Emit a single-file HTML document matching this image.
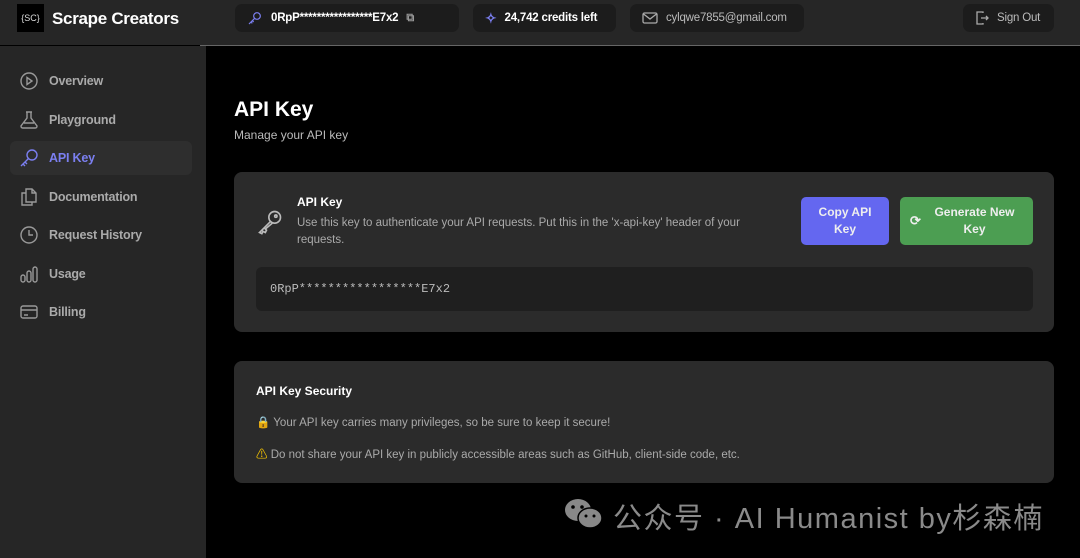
<!DOCTYPE html>
<html><head><meta charset="utf-8"><style>
*{margin:0;padding:0;box-sizing:border-box}
body{width:1080px;height:558px;background:#000;font-family:"Liberation Sans","Noto Sans CJK SC",sans-serif;overflow:hidden;position:relative;color:#fff}
.hdr{position:absolute;left:0;top:0;width:1080px;height:45px;background:#262626}
.line{position:absolute;left:200px;top:45px;width:880px;height:1px;background:#666}
.side{position:absolute;left:0;top:46px;width:206px;height:512px;background:#262626}
.pill{position:absolute;top:4px;height:28px;background:#1c1c1c;border-radius:7px;font-size:11.5px;display:flex;align-items:center;gap:8px;padding:0 12px;white-space:nowrap;letter-spacing:-0.2px}
.logo{position:absolute;left:17px;top:4px;width:27px;height:28px;background:#000;font-size:9px;color:#ddd;display:flex;align-items:center;justify-content:center}
.brand{position:absolute;left:52px;top:9px;font-size:17px;font-weight:bold;letter-spacing:-0.3px}
.nav{position:absolute;left:10px;width:182px;height:34px;border-radius:6px;display:flex;align-items:center;padding-left:9px;gap:10px;font-size:12.5px;font-weight:bold;color:#aaa;letter-spacing:-0.2px}
.nav svg{width:20px;height:20px;fill:none;stroke:#999;stroke-width:1.4}
.card{position:absolute;left:234px;width:820px;background:#2b2b2b;border-radius:8px}
.btn{position:absolute;top:25px;height:48px;border-radius:5px;font-size:12px;font-weight:bold;color:#eee;text-align:center;line-height:17px;display:flex;align-items:center;justify-content:center}
</style></head><body>
<div class="hdr"></div><div class="line"></div><div class="side"></div>
<div class="logo">{SC}</div><div class="brand">Scrape Creators</div>
<div class="pill" style="left:235px;width:224px;font-weight:bold">
<svg width="16" height="16" viewBox="0 0 24 24" fill="none" stroke="#7b7ff0" stroke-width="1.8"><circle cx="15" cy="9" r="5"/><path d="M11.5 12.5L3 21M6 18l2 2M8 16l2 2"/></svg>
<span>0RpP*****************E7x2</span><span style="color:#999;font-size:11px">⧉</span></div>
<div class="pill" style="left:473px;width:143px;font-weight:bold"><span style="color:#7b7ff0;font-size:14px">✧</span><span>24,742 credits left</span></div>
<div class="pill" style="left:630px;width:174px;color:#bbb"><svg width="16" height="14" viewBox="0 0 16 14" fill="none" stroke="#aaa" stroke-width="1.3"><rect x="1" y="2" width="14" height="10" rx="1.5"/><path d="M1.5 3l6.5 5 6.5-5"/></svg><span>cylqwe7855@gmail.com</span></div>
<div class="pill" style="left:963px;width:91px;color:#bbb"><svg width="14" height="16" viewBox="0 0 14 16" fill="none" stroke="#aaa" stroke-width="1.3"><path d="M8 3V2H2v12h6v-1M6 8h7M11 6l2 2-2 2"/></svg><span>Sign Out</span></div>

<div class="nav" style="top:64px"><svg viewBox="0 0 20 20"><circle cx="10" cy="10" r="8"/><path d="M8 6.5l5 3.5-5 3.5z"/></svg>Overview</div>
<div class="nav" style="top:103px"><svg viewBox="0 0 20 20"><path d="M7 2h6M8 2v6L2 16q0 2 2 2h12q2 0 2-2l-6-8V2M5 13h10"/></svg>Playground</div>
<div class="nav" style="top:141px;background:#2e2e2e;color:#7b7ff0"><svg viewBox="0 0 20 20" style="stroke:#7b7ff0"><circle cx="13" cy="7" r="5"/><path d="M9.5 10.5L2 18M4 16l2 2M6 14l2 2"/></svg>API Key</div>
<div class="nav" style="top:180px"><svg viewBox="0 0 20 20"><path d="M7 2h6l4 4v9H7zM13 2v4h4M7 6H3v12h10v-3"/></svg>Documentation</div>
<div class="nav" style="top:218px"><svg viewBox="0 0 20 20"><circle cx="10" cy="10" r="8"/><path d="M10 5v5h4"/></svg>Request History</div>
<div class="nav" style="top:257px"><svg viewBox="0 0 20 20"><rect x="2" y="11" width="4" height="7" rx="2"/><rect x="8" y="7" width="4" height="11" rx="2"/><rect x="14" y="3" width="4" height="15" rx="2"/></svg>Usage</div>
<div class="nav" style="top:295px"><svg viewBox="0 0 20 20"><rect x="2" y="4" width="16" height="12" rx="2"/><path d="M2 8h16M5 13h4"/></svg>Billing</div>

<div style="position:absolute;left:234px;top:98px;font-size:21px;font-weight:bold">API Key</div>
<div style="position:absolute;left:234px;top:128px;font-size:12px;color:#bbb">Manage your API key</div>

<div class="card" style="top:172px;height:160px">
<svg style="position:absolute;left:22px;top:36px" width="28" height="28" viewBox="0 0 24 24" fill="none" stroke="#bbb" stroke-width="1.4"><circle cx="16" cy="8" r="5"/><circle cx="17" cy="7" r="1"/><path d="M12.5 11.5L3 21l2 1 1-2 2 1 1-2-1-1 6-5"/></svg>
<div style="position:absolute;left:63px;top:23px;font-size:12px;font-weight:bold">API Key</div>
<div style="position:absolute;left:63px;top:43px;width:480px;font-size:11.5px;line-height:17px;color:#aaa">Use this key to authenticate your API requests. Put this in the 'x-api-key' header of your requests.</div>
<div class="btn" style="left:567px;width:88px;background:#6467f0">Copy API<br>Key</div>
<div class="btn" style="left:666px;width:133px;background:#4c9e52"><span style="position:absolute;left:10px;top:15px;font-size:13px">⟳</span><span style="margin-left:16px">Generate New<br>Key</span></div>
<div style="position:absolute;left:22px;top:95px;width:777px;height:44px;background:#1f1f1f;border-radius:6px;font-family:'Liberation Mono',monospace;font-size:12px;color:#bbb;line-height:44px;padding-left:14px">0RpP*****************E7x2</div>
</div>

<div class="card" style="top:361px;height:122px">
<div style="position:absolute;left:22px;top:23px;font-size:12px;font-weight:bold">API Key Security</div>
<div style="position:absolute;left:22px;top:54px;font-size:11.5px;color:#aaa">🔒 Your API key carries many privileges, so be sure to keep it secure!</div>
<div style="position:absolute;left:22px;top:85px;font-size:11.5px;color:#aaa"><span style="color:#f5c400">⚠</span> Do not share your API key in publicly accessible areas such as GitHub, client-side code, etc.</div>
</div>

<svg style="position:absolute;left:563px;top:497px" width="42" height="34" viewBox="0 0 42 34"><ellipse cx="15" cy="13" rx="13" ry="11" fill="#888"/><ellipse cx="27" cy="21" rx="12" ry="10" fill="#888" stroke="#000" stroke-width="1.5"/><circle cx="10" cy="10" r="1.8" fill="#000"/><circle cx="19" cy="10" r="1.8" fill="#000"/><circle cx="23" cy="19" r="1.5" fill="#000"/><circle cx="31" cy="19" r="1.5" fill="#000"/></svg>
<div style="position:absolute;left:613px;top:495px;font-size:29px;letter-spacing:1.5px;color:#8a8a8a;white-space:nowrap">公众号 · AI Humanist by杉森楠</div>
</body></html>
